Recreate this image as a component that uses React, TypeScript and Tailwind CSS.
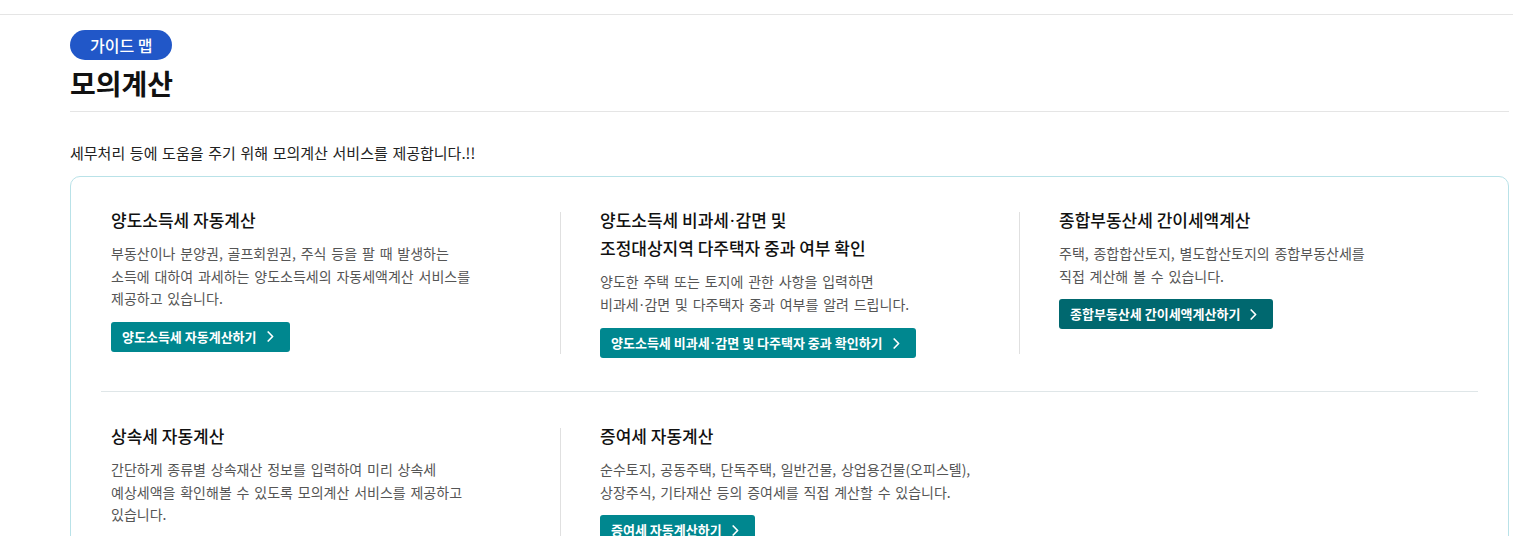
import React from "react";

const FONT = { fontFamily: '"Noto Sans CJK KR", "Noto Sans", sans-serif' };

type Item = {
  title: React.ReactNode;
  desc: React.ReactNode;
  btn: React.ReactNode;
  dark?: boolean;
  first?: boolean;
};

function Dot() {
  return <span className="mx-[1px] [font-family:'Noto_Sans',sans-serif]">·</span>;
}

function Chevron() {
  return (
    <svg width="7" height="11" viewBox="0 0 7 11" className="ml-[10px] shrink-0" fill="none">
      <polyline points="1.2,1 5.6,5.5 1.2,10" stroke="white" strokeWidth="1.7" strokeLinecap="round" strokeLinejoin="round" />
    </svg>
  );
}

function Col({ item }: { item: Item }) {
  return (
    <div
      className={
        item.first
          ? "relative pl-[10px] pr-[30px]"
          : "relative pl-[40px] pr-[30px] before:absolute before:left-0 before:top-[6px] before:bottom-[4px] before:w-px before:bg-[#e0e0e0] before:content-['']"
      }
    >
      <h3 className="text-[17px] leading-[27px] font-medium text-[#111] whitespace-nowrap">
        {item.title}
      </h3>
      <p className="mt-[9px] text-[14px] leading-[22.5px] [word-spacing:1.7px] text-[#555] whitespace-nowrap">
        {item.desc}
      </p>
      <button
        className={
          (item.dark ? "bg-[#00686f]" : "bg-[#00878f]") +
          " mt-[12px] flex h-[30px] items-center rounded-[3px] pl-[11px] pr-[16px] text-[13px] font-bold text-white whitespace-nowrap"
        }
      >
        {item.btn}
        <Chevron />
      </button>
    </div>
  );
}

export default function App() {
  const row1: Item[] = [
    {
      first: true,
      title: "양도소득세 자동계산",
      desc: (
        <>
          부동산이나 분양권, 골프회원권, 주식 등을 팔 때 발생하는
          <br />
          소득에 대하여 과세하는 양도소득세의 자동세액계산 서비스를
          <br />
          제공하고 있습니다.
        </>
      ),
      btn: "양도소득세 자동계산하기",
    },
    {
      title: (
        <>
          양도소득세 비과세<Dot />감면 및
          <br />
          조정대상지역 다주택자 중과 여부 확인
        </>
      ),
      desc: (
        <>
          양도한 주택 또는 토지에 관한 사항을 입력하면
          <br />
          비과세<Dot />감면 및 다주택자 중과 여부를 알려 드립니다.
        </>
      ),
      btn: (
        <>
          양도소득세 비과세<Dot />감면 및 다주택자 중과 확인하기
        </>
      ),
    },
    {
      title: "종합부동산세 간이세액계산",
      desc: (
        <>
          주택, 종합합산토지, 별도합산토지의 종합부동산세를
          <br />
          직접 계산해 볼 수 있습니다.
        </>
      ),
      btn: "종합부동산세 간이세액계산하기",
      dark: true,
    },
  ];
  const row2: Item[] = [
    {
      first: true,
      title: "상속세 자동계산",
      desc: (
        <>
          간단하게 종류별 상속재산 정보를 입력하여 미리 상속세
          <br />
          예상세액을 확인해볼 수 있도록 모의계산 서비스를 제공하고
          <br />
          있습니다.
        </>
      ),
      btn: "상속세 자동계산하기",
    },
    {
      title: "증여세 자동계산",
      desc: (
        <>
          순수토지, 공동주택, 단독주택, 일반건물, 상업용건물(오피스텔),
          <br />
          상장주식, 기타재산 등의 증여세를 직접 계산할 수 있습니다.
        </>
      ),
      btn: "증여세 자동계산하기",
    },
  ];

  return (
    <div className="min-h-[536px] bg-white" style={FONT}>
      <div className="h-[15px] border-b border-[#e5e5e5]" />
      <div className="ml-[70px] mr-[4px]">
        <div className="mt-[15px] inline-flex h-[30px] items-center rounded-full bg-[#2157c8] px-[20px] text-[16px] font-medium text-white">
          가이드 맵
        </div>
        <h1 className="mt-[5px] border-b border-[#e5e5e5] pb-[10px] text-[28px] leading-[36px] font-bold text-[#111]">
          모의계산
        </h1>
        <p className="mt-[30px] text-[15px] leading-[22px] [word-spacing:1.3px] text-[#222]">
          세무처리 등에 도움을 주기 위해 모의계산 서비스를 제공합니다.!!
        </p>
        <div className="mt-[12px] rounded-[10px] border border-[#b9e2e8] px-[30px] pt-[29px]">
          <div className="grid grid-cols-3 border-b border-[#dfe6e8] pb-[33px]">
            {row1.map((it, i) => (
              <Col key={i} item={it} />
            ))}
          </div>
          <div className="grid grid-cols-3 pt-[30px] pb-[30px]">
            {row2.map((it, i) => (
              <Col key={i} item={it} />
            ))}
          </div>
        </div>
      </div>
    </div>
  );
}
